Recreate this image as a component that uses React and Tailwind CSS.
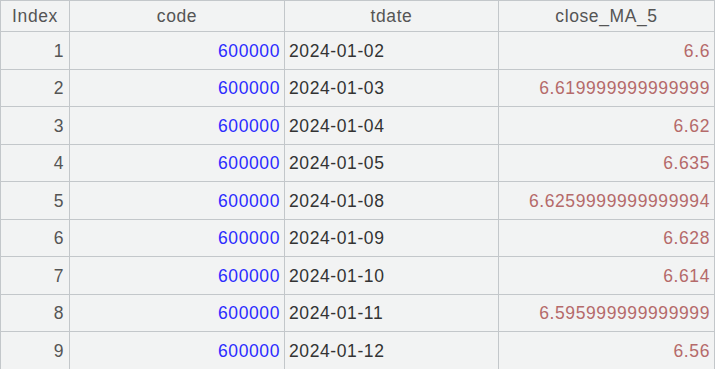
import React from 'react';

const rows = [
  ['1', '600000', '2024-01-02', '6.6'],
  ['2', '600000', '2024-01-03', '6.619999999999999'],
  ['3', '600000', '2024-01-04', '6.62'],
  ['4', '600000', '2024-01-05', '6.635'],
  ['5', '600000', '2024-01-08', '6.6259999999999994'],
  ['6', '600000', '2024-01-09', '6.628'],
  ['7', '600000', '2024-01-10', '6.614'],
  ['8', '600000', '2024-01-11', '6.595999999999999'],
  ['9', '600000', '2024-01-12', '6.56'],
];

export default function App() {
  return (
    <div className="w-[717px] h-[369px] overflow-hidden bg-white" style={{ fontFamily: '"Liberation Sans", Arial, sans-serif' }}>
      <div className="w-[715px] border-l border-t border-[#c3c7ca] bg-[#f2f3f3] text-[17.5px] tracking-[0.6px]">
        {/* header */}
        <div className="grid grid-cols-[69px_215px_214px_216px] h-[31px] text-[#555]">
          <div className="flex items-center justify-center border-r border-b border-[#c3c7ca]">Index</div>
          <div className="flex items-center justify-center border-r border-b border-[#c3c7ca]">code</div>
          <div className="flex items-center justify-center border-r border-b border-[#c3c7ca]">tdate</div>
          <div className="flex items-center justify-center border-r border-b border-[#c3c7ca]">close_MA_5</div>
        </div>
        {rows.map((r) => (
          <div key={r[0]} className="grid grid-cols-[69px_215px_214px_216px] h-[37.5px]">
            <div className="flex items-center justify-end pr-[5px] pt-[1px] border-r border-b border-[#c3c7ca] text-[#555]">{r[0]}</div>
            <div className="flex items-center justify-end pr-[4px] pt-[1px] border-r border-b border-[#c3c7ca] text-[#2b2bff]">{r[1]}</div>
            <div className="flex items-center justify-start pl-[4px] pt-[1px] border-r border-b border-[#c3c7ca] text-[#333]">{r[2]}</div>
            <div className="flex items-center justify-end pr-[4px] pt-[1px] border-r border-b border-[#c3c7ca] text-[#b56a6a]">{r[3]}</div>
          </div>
        ))}
      </div>
    </div>
  );
}
